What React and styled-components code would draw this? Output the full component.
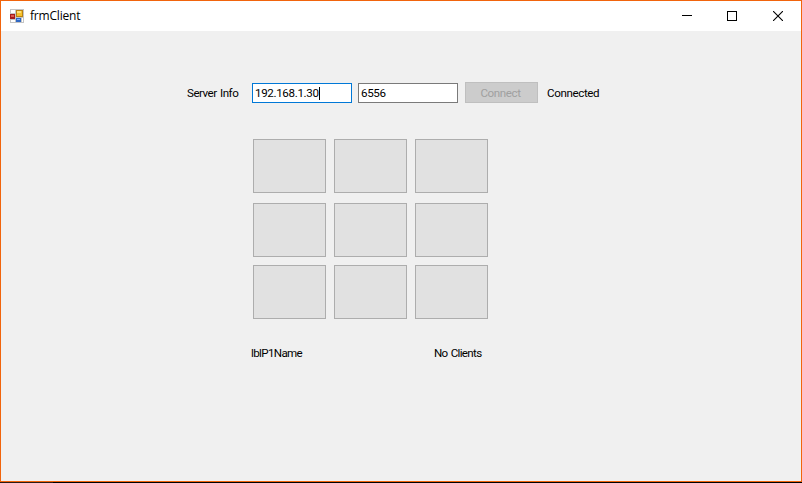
import React from 'react';
import styled, { createGlobalStyle } from 'styled-components';

const GlobalStyle = createGlobalStyle`
  * { box-sizing: border-box; }
  html, body { margin: 0; overflow: hidden; background: #000; }
`;

const Screen = styled.div`
  width: 802px;
  height: 483px;
  display: flex;
  flex-direction: column;
  background: #000;
`;

const Window = styled.main`
  height: 482px;
  display: flex;
  flex-direction: column;
  border: 1px solid #f1640c;
  background: #f0f0f0;
  color: #000;
  font-family: Roboto, "Liberation Sans", sans-serif;
  font-size: 11.6px;
`;

const DesktopEdge = styled.div`
  width: 53px;
  height: 1px;
  background: #2b1a14;
`;

const TitleBar = styled.header`
  height: 30px;
  display: flex;
  align-items: center;
  padding-left: 9px;
  background: #fff;
`;

const Title = styled.span`
  flex: 1;
  margin-left: 6px;
  font-family: "Open Sans", "Noto Sans", sans-serif;
  font-size: 12px;
  line-height: 16px;
  letter-spacing: -0.2px;
`;

const CaptionButton = styled.button`
  width: ${(p) => p.$width || 46}px;
  height: 30px;
  display: flex;
  align-items: center;
  justify-content: center;
  padding: 0;
  border: 0;
  background: none;
`;

const Form = styled.section`
  flex: 1;
  display: flex;
  flex-direction: column;
`;

const ServerRow = styled.div`
  height: 21px;
  display: flex;
  align-items: center;
  margin: 51px 0 0 186px;
`;

const Label = styled.span`
  width: ${(p) => (p.$width ? `${p.$width}px` : 'auto')};
  padding-top: 1px;
  line-height: 15px;
  white-space: nowrap;
  letter-spacing: ${(p) => p.$tracking || '0'};
  word-spacing: 1px;
`;

const Field = styled.div`
  width: 100px;
  height: 20px;
  display: flex;
  align-items: center;
  align-self: flex-end;
  margin-right: ${(p) => p.$gap}px;
  padding: 0 2px;
  border: 1px solid ${(p) => (p.$focused ? '#0078d7' : '#7a7a7a')};
  background: #fff;
  letter-spacing: -0.35px;
`;

const Caret = styled.span`
  width: 1px;
  height: 13px;
  background: #000;
`;

const ConnectButton = styled.button`
  width: 73px;
  height: 21px;
  margin-right: 9px;
  padding: 0 2px 0 0;
  border: 1px solid #bfbfbf;
  background: #ccc;
  color: #a0a0a0;
  font: inherit;
  letter-spacing: -0.4px;
`;

const Board = styled.div`
  display: grid;
  grid-template-columns: repeat(3, 73px);
  grid-template-rows: 64px 62px 54px;
  column-gap: 8px;
  margin: 36px 0 0 252px;
`;

const Cell = styled.button`
  height: 54px;
  padding: 0;
  border: 1px solid #adadad;
  background: #e1e1e1;
`;

const PlayerRow = styled.div`
  display: flex;
  margin: 26px 0 0 250px;
`;

const AppIcon = () => (
  <svg width="14" height="14" viewBox="0 0 14 14" shapeRendering="crispEdges">
    <path d="M0 0h14v14H0z" fill="#c4c4c4" />
    <path d="M1 1h4v3H1zM1 11h4v2H1zM12 9h1v4h-1z" fill="#fff" />
    <path d="M0 5h5v5H0z" fill="#a51c1c" />
    <path d="M1 6h3v2H1z" fill="#df5a4c" />
    <path d="M6 1h7v7H6z" fill="#b98213" />
    <path d="M7 2h5v5H7z" fill="#f6c22d" />
    <path d="M7 2h4v2H7z" fill="#ffe178" />
    <path d="M6 9h5v4H6z" fill="#2f68c4" />
    <path d="M7 10h3v1H7z" fill="#80b4ff" />
  </svg>
);

const cells = Array.from({ length: 9 }, (_, i) => i);

export default function App() {
  return (
    <Screen>
      <GlobalStyle />
      <Window>
        <TitleBar>
          <AppIcon />
          <Title>frmClient</Title>
          <CaptionButton aria-label="Minimize" $width={44}>
            <svg width="10" height="10"><path d="M0 4.5h10" stroke="#000" shapeRendering="crispEdges" /></svg>
          </CaptionButton>
          <CaptionButton aria-label="Maximize">
            <svg width="10" height="10"><path d="M.5.5h9v9h-9z" fill="none" stroke="#000" shapeRendering="crispEdges" /></svg>
          </CaptionButton>
          <CaptionButton aria-label="Close">
            <svg width="10" height="10"><path d="M0 0l10 10M10 0L0 10" stroke="#000" strokeWidth="1.1" /></svg>
          </CaptionButton>
        </TitleBar>
        <Form>
          <ServerRow>
            <Label $width={65} $tracking="-0.5px">Server Info</Label>
            <Field $focused $gap={6}>192.168.1.30<Caret /></Field>
            <Field $gap={7}>6556</Field>
            <ConnectButton disabled>Connect</ConnectButton>
            <Label $tracking="-0.38px">Connected</Label>
          </ServerRow>
          <Board>
            {cells.map((id) => <Cell key={id} aria-label={`Cell ${id + 1}`} />)}
          </Board>
          <PlayerRow>
            <Label $width={183} $tracking="-0.64px">lblP1Name</Label>
            <Label $tracking="-0.68px">No Clients</Label>
          </PlayerRow>
        </Form>
      </Window>
      <DesktopEdge />
    </Screen>
  );
}
